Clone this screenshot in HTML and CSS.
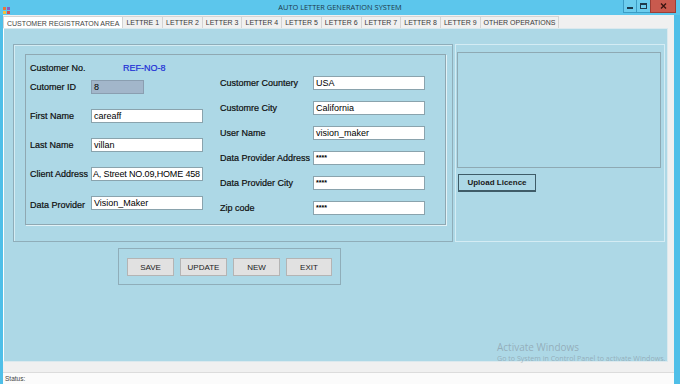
FILE: index.html
```html
<!DOCTYPE html>
<html lang="en">
<head>
  <meta charset="UTF-8">
  <title>AUTO LETTER GENERATION SYSTEM</title>
  <link rel="stylesheet" href="styles.css">
</head>
<body>
  <div class="window">
    <div class="titlebar">
      <div class="app-icon">
        <svg width="9" height="9" viewBox="0 0 9 9">
          <rect x="1" y="1" width="3" height="3" fill="#e8743b"/>
          <rect x="5" y="1" width="3" height="3" fill="#8a5cc4"/>
          <rect x="1" y="5" width="3" height="3" fill="#f3c13a"/>
          <rect x="5" y="5" width="3" height="3" fill="#d94f4f"/>
        </svg>
      </div>
      <div class="title">AUTO LETTER GENERATION SYSTEM</div>
      <div class="controls">
        <span class="ctl ctl-min"><svg width="6" height="6" viewBox="0 0 6 6"><rect x="0" y="4" width="6" height="2" fill="#1e3a4c"/></svg></span>
        <span class="ctl ctl-max"><svg width="7" height="6" viewBox="0 0 7 6"><rect x="0.5" y="0.5" width="6" height="5" fill="none" stroke="#1e3a4c"/><rect x="0" y="0" width="7" height="2" fill="#1e3a4c"/></svg></span>
        <span class="ctl ctl-close"><svg width="7" height="6" viewBox="0 0 7 6"><path d="M1 0.5 L6 5.5 M6 0.5 L1 5.5" stroke="#3a1410" stroke-width="1.4"/></svg></span>
      </div>
    </div>

    <div class="client">
      <div class="tabs">
        <div class="tab active">CUSTOMER REGISTRATON AREA</div>
        <div class="tab">LETTRE 1</div>
        <div class="tab">LETTER 2</div>
        <div class="tab">LETTER 3</div>
        <div class="tab">LETTER 4</div>
        <div class="tab">LETTER 5</div>
        <div class="tab">LETTER 6</div>
        <div class="tab">LETTER 7</div>
        <div class="tab">LETTER 8</div>
        <div class="tab">LETTER 9</div>
        <div class="tab">OTHER OPERATIONS</div>
      </div>

      <div class="page">
        <div class="top-row">
          <div class="group group-left">
            <div class="inner-box">
              <div class="col col-left">
                <div class="frow">
                  <span class="lbl">Customer No.</span>
                  <span class="ref">REF-NO-8</span>
                </div>
                <div class="frow frow-id">
                  <span class="lbl">Cutomer ID</span>
                  <span class="field field-id">8</span>
                </div>
                <div class="frow">
                  <span class="lbl">First Name</span>
                  <span class="field">careaff</span>
                </div>
                <div class="frow">
                  <span class="lbl">Last Name</span>
                  <span class="field">villan</span>
                </div>
                <div class="frow">
                  <span class="lbl">Client Address</span>
                  <span class="field field-long">A, Street NO.09,HOME 458</span>
                </div>
                <div class="frow">
                  <span class="lbl lbl-low">Data Provider</span>
                  <span class="field">Vision_Maker</span>
                </div>
              </div>

              <div class="col col-right">
                <div class="frow">
                  <span class="lbl">Customer Countery</span>
                  <span class="field">USA</span>
                </div>
                <div class="frow">
                  <span class="lbl">Customre City</span>
                  <span class="field">California</span>
                </div>
                <div class="frow">
                  <span class="lbl">User Name</span>
                  <span class="field">vision_maker</span>
                </div>
                <div class="frow">
                  <span class="lbl">Data Provider Address</span>
                  <span class="field pw">****</span>
                </div>
                <div class="frow">
                  <span class="lbl">Data Provider City</span>
                  <span class="field pw">****</span>
                </div>
                <div class="frow">
                  <span class="lbl">Zip code</span>
                  <span class="field pw">****</span>
                </div>
              </div>
            </div>
          </div>

          <div class="group group-right">
            <div class="picture"></div>
            <button class="upload-btn">Upload Licence</button>
          </div>
        </div>

        <div class="actions">
          <button class="btn">SAVE</button>
          <button class="btn">UPDATE</button>
          <button class="btn">NEW</button>
          <button class="btn btn-exit">EXIT</button>
        </div>
      </div>

      <div class="gap-band"></div>
      <div class="statusbar">Status:</div>
    </div>

    <div class="watermark">
      <div class="wm-big">Activate Windows</div>
      <div class="wm-small">Go to System in Control Panel to activate Windows.</div>
    </div>
  </div>
</body>
</html>
```

FILE: styles.css
```css
body {
  margin: 0;
  font-family: "Liberation Sans", Arial, sans-serif;
  background-color: #f0f0f0;
}

.window {
  position: relative;
  width: 680px;
  height: 384px;
  display: flex;
  flex-direction: column;
  overflow: hidden;
  background-color: #f0f0f0;
}

/* Title bar */
.titlebar {
  height: 15px;
  flex: none;
  display: grid;
  grid-template-columns: 1fr auto 1fr;
  background-color: #5cc6ec;
}

.app-icon {
  padding: 1px 0 0 2px;
}

.title {
  font-family: "Open Sans", "Liberation Sans", sans-serif;
  font-size: 7.4px;
  line-height: 15px;
  color: #20384a;
}

.controls {
  display: flex;
  justify-content: flex-end;
  padding-right: 4px;
}

.ctl {
  height: 13px;
  display: flex;
  align-items: center;
  justify-content: center;
  box-sizing: border-box;
}

.ctl-min {
  width: 14px;
  background-color: #6ccdee;
  border: 1px solid #3c9cc4;
  border-top: none;
}

.ctl-max {
  width: 13px;
  background-color: #6ccdee;
  border-bottom: 1px solid #3c9cc4;
}

.ctl-close {
  width: 26px;
  background-color: #c95a4e;
  border: 1px solid #9c3e35;
  border-top: none;
}

/* Client area */
.client {
  flex: 1;
  display: flex;
  flex-direction: column;
  border-left: 3px solid #4fbfe8;
  border-right: 6px solid #4fbfe8;
}

.tabs {
  height: 13px;
  display: flex;
  align-items: flex-end;
}

.tab {
  height: 11px;
  line-height: 11px;
  padding: 0 3px;
  font-size: 7px;
  color: #3a3a3a;
  background-color: #f0f0f0;
  border-top: 1px solid #d4d4d4;
  border-right: 1px solid #d4d4d4;
  white-space: nowrap;
}

.tab.active {
  height: 12px;
  line-height: 13px;
  background-color: #fff;
  border-left: 1px solid #d4d4d4;
  color: #444;
  margin-bottom: -1px;
}

.page {
  width: 665px;
  height: 334px;
  box-sizing: border-box;
  background-color: #add8e6;
  border: 1px solid #dbe9ee;
  border-left-color: #fff;
}

.top-row {
  display: flex;
  gap: 2px;
  padding: 15px 0 0 9px;
}

.group {
  box-sizing: border-box;
  height: 198px;
}

.group-left {
  width: 440px;
  border: 1px solid #8fadb9;
  box-shadow: inset 1px 1px 0 #d4ecf3;
  padding: 9px 0 0 11px;
}

.inner-box {
  width: 421px;
  height: 171px;
  box-sizing: border-box;
  border: 1px solid #8fa8b2;
  box-shadow: 1px 1px 0 #e2f2f7;
  display: flex;
  padding-left: 4px;
}

.col {
  display: flex;
  flex-direction: column;
}

.col-left {
  width: 190px;
  padding-top: 6px;
  gap: 15px;
}

.col-left .frow-id {
  margin-top: -10px;
}

.col-right {
  padding-top: 21px;
  gap: 11px;
}

.frow {
  height: 14px;
  display: flex;
  align-items: center;
}

.lbl {
  font-size: 9px;
  color: #0e0e0e;
  white-space: nowrap;
  -webkit-text-stroke: 0.2px #0e0e0e;
}

.col-left .lbl {
  width: 61px;
}

.col-right .lbl {
  width: 93px;
}

.lbl-low {
  padding-top: 4px;
}

.ref {
  font-size: 9px;
  color: #1d2fd6;
  padding-left: 32px;
  -webkit-text-stroke: 0.2px #1d2fd6;
}

.field {
  width: 112px;
  height: 14px;
  box-sizing: border-box;
  background-color: #fff;
  border: 1px solid #8aa3ad;
  font-size: 9px;
  line-height: 12px;
  padding-left: 2px;
  color: #000;
  white-space: nowrap;
  overflow: hidden;
}

.field-long {
  padding-left: 1px;
  letter-spacing: -0.15px;
}

.field-id {
  width: 53px;
  background-color: #a2b6ca;
  border-color: #8a9eb0;
}

.pw {
  font-size: 7px;
  font-weight: bold;
}

.group-right {
  width: 210px;
  border: 1px solid #d4ecf4;
  padding: 7px 0 0 1px;
}

.picture {
  width: 204px;
  height: 116px;
  box-sizing: border-box;
  border: 1px solid #8ea9b3;
}

.upload-btn {
  display: block;
  margin: 6px 0 0 1px;
  width: 78px;
  height: 18px;
  padding: 0;
  font-family: "Liberation Sans", Arial, sans-serif;
  font-size: 8px;
  font-weight: bold;
  color: #1a1a1a;
  background-color: #add8e6;
  border: 1px solid #3f5c68;
  border-bottom-width: 2px;
}

/* Bottom buttons */
.actions {
  width: 223px;
  height: 37px;
  box-sizing: border-box;
  margin: 6px 0 0 114px;
  border: 1px solid #8fadb9;
  display: flex;
  gap: 6px;
  padding: 9px 0 0 8px;
}

.btn {
  width: 47px;
  height: 18px;
  padding: 0;
  font-family: "Liberation Sans", Arial, sans-serif;
  font-size: 8px;
  color: #222;
  background-color: #e1e1e1;
  border: 1px solid #b4b4b4;
}

.btn-exit {
  width: 46px;
}

.gap-band {
  height: 10px;
  background-color: #f0f0f0;
}

.statusbar {
  flex: 1;
  font-size: 6.5px;
  line-height: 12px;
  padding-left: 2px;
  color: #444;
  background-color: #fbfbfb;
  border-top: 1px solid #dcdcdc;
  border-bottom: 1px solid #6a7a84;
}

/* Watermark over the form */
.watermark {
  position: absolute;
  left: 497px;
  top: 341px;
  font-family: "Open Sans", "Liberation Sans", sans-serif;
  color: rgba(140, 160, 172, 0.75);
  pointer-events: none;
}

.wm-big {
  font-size: 10px;
  line-height: 13px;
}

.wm-small {
  font-size: 7.1px;
  line-height: 9px;
  white-space: nowrap;
}
```
